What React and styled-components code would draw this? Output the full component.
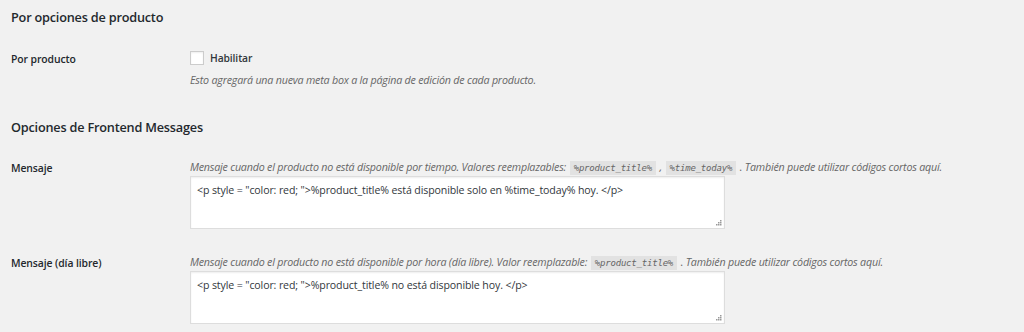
import styled, { createGlobalStyle } from 'styled-components';

const GlobalStyle = createGlobalStyle`
  html, body {
    margin: 0;
    background: #f1f1f1;
  }
  body {
    font-family: "Open Sans", "Noto Sans", sans-serif;
    color: #23282d;
  }
`;

const Page = styled.div`
  width: 1024px;
  height: 332px;
  overflow: hidden;
  padding: 8px 0 0 11px;
  box-sizing: border-box;
`;

const SectionTitle = styled.h2`
  margin: 0;
  font-size: 12.7px;
  font-weight: 600;
  line-height: 18px;
  letter-spacing: -0.2px;
  margin-bottom: ${(p) => p.gap}px;
`;

const Row = styled.div`
  display: grid;
  grid-template-columns: 179px 540px;
  margin-bottom: ${(p) => p.gap || 0}px;
`;

const Label = styled.div`
  font-size: 10.4px;
  font-weight: 600;
  line-height: 16px;
  padding-top: ${(p) => p.top || 0}px;
  letter-spacing: -0.1px;
`;

const Field = styled.div`
  display: flex;
  flex-direction: column;
`;

const CheckRow = styled.label`
  display: flex;
  align-items: center;
  gap: 6px;
  font-size: 10.3px;
  font-weight: 600;
  line-height: 16px;
  color: #32373c;
  letter-spacing: -0.1px;
`;

const Box = styled.span`
  width: 12px;
  height: 12px;
  background: #fff;
  border: 1px solid #ccc;
  box-shadow: inset 0 1px 2px rgba(0, 0, 0, 0.07);
`;

const Description = styled.p`
  margin: ${(p) => p.top || 0}px 0 0;
  font-size: 10.7px;
  font-style: italic;
  line-height: 16px;
  color: #666;
  white-space: nowrap;
  letter-spacing: -0.2px;
`;

const Code = styled.code`
  font-family: "DejaVu Sans Mono", monospace;
  font-style: italic;
  font-size: 9px;
  background: #e2e2e2;
  color: #666;
  padding: 2px 4px;
  margin: 0 1px;
  letter-spacing: -0.2px;
`;

const AreaWrap = styled.div`
  position: relative;
  width: 535px;
  height: 53px;
`;

const Area = styled.textarea`
  box-sizing: border-box;
  width: 100%;
  height: 100%;
  resize: none;
  background: #fff;
  border: 1px solid #ddd;
  box-shadow: inset 0 1px 2px rgba(0, 0, 0, 0.07);
  padding: 5px 6px;
  font-family: "Open Sans", "Noto Sans", sans-serif;
  font-size: 10.6px;
  line-height: 16px;
  color: #32373c;
  letter-spacing: -0.12px;
  outline: none;
`;

const Grip = styled.svg`
  position: absolute;
  right: 3px;
  bottom: 3px;
`;

function ResizeGrip() {
  return (
    <Grip width="6" height="6" viewBox="0 0 6 6">
      <rect x="4" y="0" width="1.5" height="1.5" fill="#999" />
      <rect x="2" y="2" width="1.5" height="1.5" fill="#999" />
      <rect x="4" y="2" width="1.5" height="1.5" fill="#999" />
      <rect x="0" y="4" width="1.5" height="1.5" fill="#999" />
      <rect x="2" y="4" width="1.5" height="1.5" fill="#999" />
      <rect x="4" y="4" width="1.5" height="1.5" fill="#999" />
    </Grip>
  );
}

function MessageField({ value }) {
  return (
    <AreaWrap>
      <Area defaultValue={value} />
      <ResizeGrip />
    </AreaWrap>
  );
}

export default function App() {
  return (
    <>
      <GlobalStyle />
      <Page>
        <SectionTitle gap={24}>Por opciones de producto</SectionTitle>
        <Row gap={30}>
          <Label top={1}>Por producto</Label>
          <Field>
            <CheckRow>
              <Box />
              Habilitar
            </CheckRow>
            <Description top={6}>
              Esto agregará una nueva meta box a la página de edición de cada producto.
            </Description>
          </Field>
        </Row>
        <SectionTitle gap={23}>Opciones de Frontend Messages</SectionTitle>
        <Row gap={25}>
          <Label top={1}>Mensaje</Label>
          <Field>
            <Description>
              Mensaje cuando el producto no está disponible por tiempo. Valores reemplazables:{' '}
              <Code>%product_title%</Code> , <Code>%time_today%</Code> . También puede utilizar
              códigos cortos aquí.
            </Description>
            <MessageField value={'<p style = "color: red; ">%product_title% está disponible solo en %time_today% hoy. </p>'} />
          </Field>
        </Row>
        <Row>
          <Label top={1}>Mensaje (día libre)</Label>
          <Field>
            <Description>
              Mensaje cuando el producto no está disponible por hora (día libre). Valor reemplazable:{' '}
              <Code>%product_title%</Code> . También puede utilizar códigos cortos aquí.
            </Description>
            <MessageField value={'<p style = "color: red; ">%product_title% no está disponible hoy. </p>'} />
          </Field>
        </Row>
      </Page>
    </>
  );
}
